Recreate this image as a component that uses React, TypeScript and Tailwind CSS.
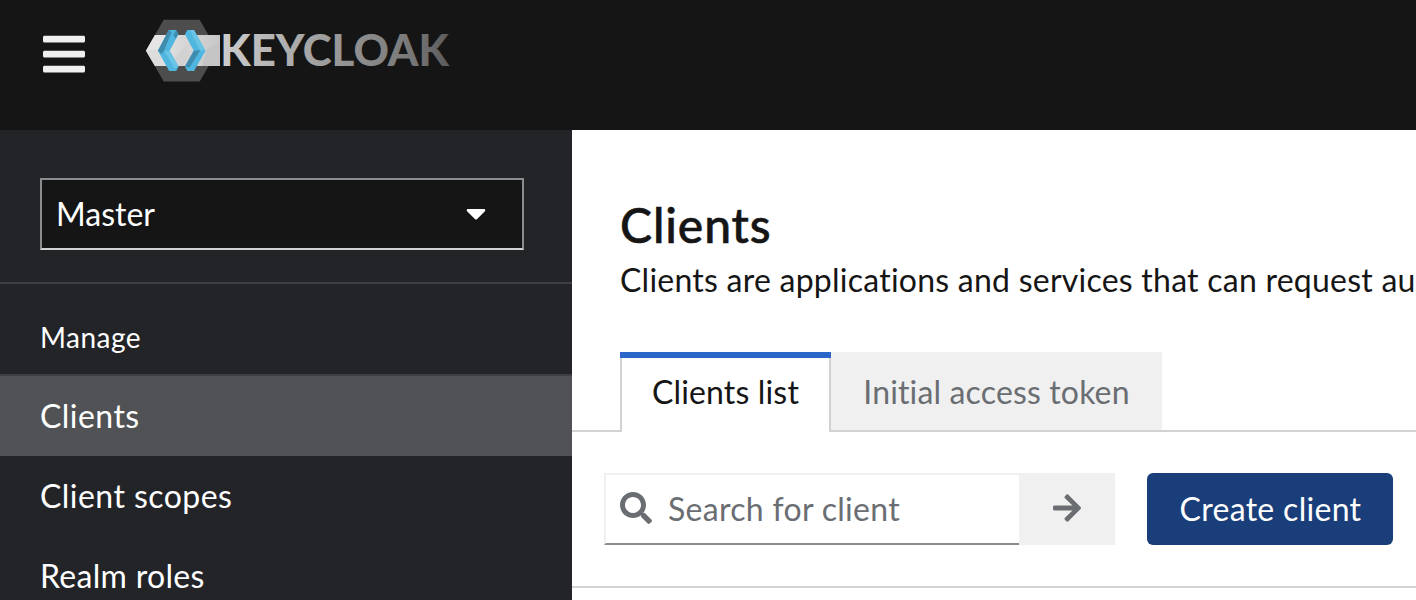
import { FaArrowRight, FaBars, FaCaretDown, FaSearch } from "react-icons/fa";

function Logo() {
  return (
    <svg className="mt-[15px] h-[70px] w-[310px]" viewBox="142 15 310 70" role="img" aria-label="Keycloak">
      <defs>
        <linearGradient id="band" gradientUnits="userSpaceOnUse" x1="146" y1="0" x2="220" y2="0">
          <stop offset="0" stopColor="#e6e6e6" />
          <stop offset="1" stopColor="#c8c8c8" />
        </linearGradient>
        <linearGradient id="word" gradientUnits="userSpaceOnUse" x1="223" y1="0" x2="449" y2="12">
          <stop offset="0" stopColor="#cdcdcd" />
          <stop offset="0.5" stopColor="#999999" />
          <stop offset="0.85" stopColor="#777777" />
          <stop offset="1" stopColor="#5c5c5c" />
        </linearGradient>
      </defs>
      <path d="M163.7 19.7H199.7L217.5 50.7L199.7 81.5H163.7L146 50.7Z" fill="#4d4d4d" />
      <path d="M155 35H220V66H155L146 50.7Z" fill="url(#band)" />
      <path d="M155 35H168L158 49L146 50.7Z" fill="#e5e5e5" />
      <path d="M146 50.7L158 49L163 66H155Z" fill="#dddddd" />
      <path d="M207 49L220 41V66H202Z" fill="#c5c5c5" />
      <path d="M176 56L186 46L196 66H172Z" fill="#d2d2d2" />

      <path d="M168.8 30H176.2L178.5 34.2L169.6 50.7L178.5 66.6L176.2 71H169.2L157.9 50.7Z" fill="#4fb6e0" />
      <path d="M168.8 30L171.6 32.3L164 50.7L161.6 54L157.9 50.7Z" fill="#3f8cae" />
      <path d="M176.2 30L178.5 34.2L175.6 38.6L173.4 35.5Z" fill="#3f8cae" />
      <path d="M164.2 50.7H169.6L178.5 66.6L174.5 68.5Z" fill="#6ac4e6" />

      <path d="M187.3 30H194L205.5 50.7L194 71H187.5L184.9 66.6L193.8 50.7L184.9 34.2Z" fill="#4fb6e0" />
      <path d="M189.8 30H194L205.2 50.2L200 50.7Z" fill="#6ac4e6" />
      <path d="M193.8 50.7L200.3 50.2L189.6 67.5L184.9 66.6Z" fill="#3f8cae" />
      <text x="220.3" y="66" textLength="228.7" lengthAdjust="spacingAndGlyphs" className="font-['Lato',sans-serif] text-[43px] font-black" fill="url(#word)">KEYCLOAK</text>
    </svg>
  );
}

export default function App() {
  return (
    <div className="flex h-[600px] w-[1416px] flex-col overflow-hidden bg-white font-['Lato',sans-serif] text-[32px] leading-[48px] text-[#151515]">
      <header className="flex h-[130px] shrink-0 bg-[#151515]">
        <button className="mt-[30px] ml-10 h-12 w-12" aria-label="Toggle navigation">
          <FaBars className="size-12 text-[#f0f0f0]" />
        </button>
        <div className="ml-[54px]">
          <Logo />
        </div>
      </header>
      <div className="flex min-h-0 flex-1">
        <aside className="flex w-[572px] shrink-0 flex-col overflow-hidden bg-[#232428] text-white">
          <div className="h-[154px] shrink-0 border-b-2 border-[#3e3f43] px-10 pt-12">
            <button className="flex h-[72px] w-[484px] items-center justify-between border-2 border-[#8a8d90] border-b-[#d2d2d2] bg-[#151515] pr-[30px] pb-px pl-[14px]">
              <span>Master</span>
              <FaCaretDown className="-mt-0.5 size-8" />
            </button>
          </div>
          <nav className="flex flex-col whitespace-nowrap">
            <h2 className="h-[92px] border-b-2 border-[#3e3f43] pt-[29px] pl-10 text-[28px] tracking-[0.5px]">Manage</h2>
            <a className="h-20 bg-[#515255] pt-4 pl-10 tracking-[0.45px]">Clients</a>
            <a className="h-20 pt-4 pl-10 tracking-[0.45px]">Client scopes</a>
            <a className="h-20 pt-4 pl-10 tracking-[0.3px]">Realm roles</a>
          </nav>
        </aside>
        <main className="flex w-[844px] flex-col overflow-hidden whitespace-nowrap">
          <div className="h-[222px] shrink-0 pt-16 pl-12">
            <h1 className="text-[48px] leading-[62px] font-medium tracking-[0.9px] [-webkit-text-stroke:0.6px_#151515]">Clients</h1>
            <p className="tracking-[0.24px]">Clients are applications and services that can request au</p>
          </div>
          <div className="flex h-20 shrink-0">
            <div className="w-12 border-b-2 border-[#d2d2d2]" />
            <button className="flex w-[211px] flex-col border-t-[6px] border-[#2b66c9]">
              <span className="flex w-full flex-1 items-center justify-center border-x-2 border-[#d2d2d2] pb-[6px] tracking-[0.15px]">Clients list</span>
            </button>
            <button className="w-[331px] border-b-2 border-[#d2d2d2] bg-[#f0f0f0] pt-0.5 tracking-[0.15px] text-[#6a6e73]">Initial access token</button>
            <div className="flex-1 border-b-2 border-[#d2d2d2]" />
          </div>
          <div className="flex h-[156px] shrink-0 border-b-2 border-[#d2d2d2] pt-[41px] pl-8">
            <div className="flex h-[72px] w-[415px] items-center border-t-2 border-b-2 border-l-2 border-[#f0f0f0] border-b-[#8a8d90] pl-[14px] text-[#6a6e73]">
              <FaSearch className="-mt-0.5 size-8" />
              <span className="ml-4 tracking-[0.3px]">Search for client</span>
            </div>
            <button className="flex h-[72px] w-24 items-center justify-center bg-[#f0f0f0] pb-0.5 text-[#6a6e73]" aria-label="Search">
              <FaArrowRight className="size-8" />
            </button>
            <button className="ml-8 h-[72px] w-[246px] rounded-md bg-[#1a3e7a] pl-px tracking-[0.3px] text-white">Create client</button>
          </div>
        </main>
      </div>
    </div>
  );
}
